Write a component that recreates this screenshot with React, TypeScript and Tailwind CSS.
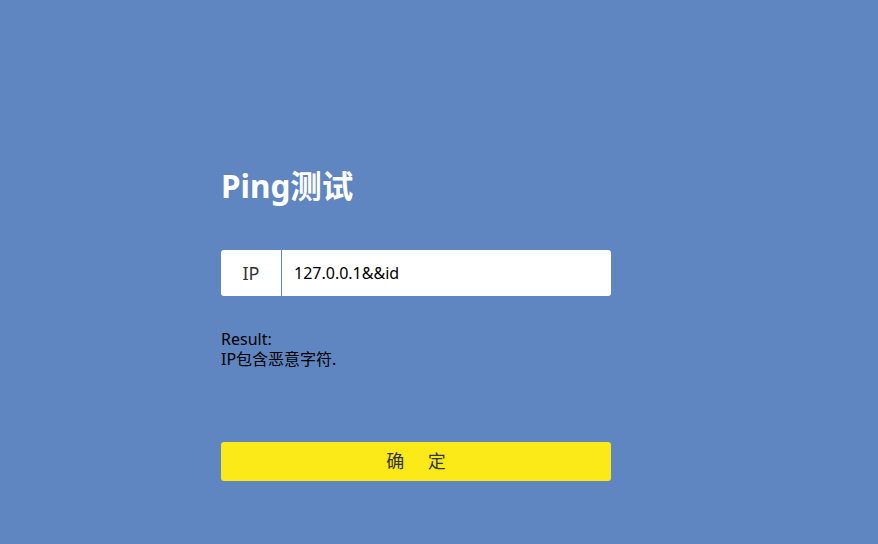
export default function App() {
  return (
    <div
      className="w-[878px] h-[544px] bg-[#5f86c0] overflow-hidden"
      style={{ fontFamily: '"Noto Sans", "Noto Sans CJK SC", sans-serif' }}
    >
      <div className="w-[390px] ml-[221px] pt-[164px] flex flex-col">
        <h1 className="text-[31.5px] leading-[44px] font-bold text-white">Ping测试</h1>
        <div className="mt-[42px] h-[46px] bg-white rounded-[3px] flex items-stretch">
          <div className="w-[61px] flex items-center justify-center text-[18px] text-[#333] border-r border-[#5f86c0]">IP</div>
          <div className="flex-1 flex items-center pl-[12px] text-[16px] text-black">127.0.0.1&amp;&amp;id</div>
        </div>
        <div className="mt-[33px] text-[16px] leading-[20px] text-black">
          <div>Result:</div>
          <div>IP包含恶意字符.</div>
        </div>
        <button className="mt-[73px] h-[39px] bg-[#fbea18] rounded-[3px] text-[18px] text-[#333] flex items-center justify-center">
          确&nbsp;&nbsp;&nbsp;&nbsp;&nbsp;定
        </button>
      </div>
    </div>
  );
}
